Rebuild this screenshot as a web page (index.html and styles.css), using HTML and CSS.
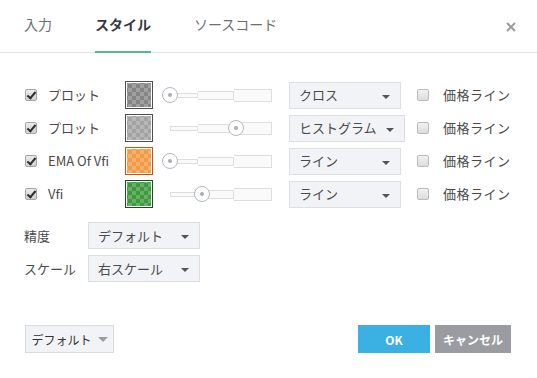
FILE: index.html
```html
<!DOCTYPE html>
<html lang="ja">
<head>
    <meta charset="UTF-8">
    <meta name="viewport" content="width=device-width, initial-scale=1.0">
    <title>スタイル</title>
    <link rel="stylesheet" href="styles.css">
</head>
<body>
    <div class="dialog">
        <header class="tabs">
            <span class="tab">入力</span>
            <span class="tab active">スタイル</span>
            <span class="tab">ソースコード</span>
            <span class="close">
                <svg width="10" height="10" viewBox="0 0 10 10"><path d="M1 1 L9 9 M9 1 L1 9" stroke="#9a9da3" stroke-width="2"/></svg>
            </span>
        </header>

        <div class="content">
            <div class="plot-row">
                <span class="check checked"></span>
                <span class="label">プロット</span>
                <span class="swatch swatch-dark"></span>
                <div class="slider">
                    <div class="track"><i class="seg s1"></i><i class="seg s2"></i><i class="seg s3"></i></div>
                    <span class="handle" style="left: 0px"></span>
                </div>
                <div class="select">クロス</div>
                <span class="check"></span>
                <span class="price">価格ライン</span>
            </div>
            <div class="plot-row">
                <span class="check checked"></span>
                <span class="label">プロット</span>
                <span class="swatch swatch-gray"></span>
                <div class="slider">
                    <div class="track"><i class="seg s1"></i><i class="seg s2"></i><i class="seg s3"></i></div>
                    <span class="handle" style="left: 66px"></span>
                </div>
                <div class="select wide">ヒストグラム</div>
                <span class="check"></span>
                <span class="price">価格ライン</span>
            </div>
            <div class="plot-row">
                <span class="check checked"></span>
                <span class="label">EMA Of Vfi</span>
                <span class="swatch swatch-orange"></span>
                <div class="slider">
                    <div class="track"><i class="seg s1"></i><i class="seg s2"></i><i class="seg s3"></i></div>
                    <span class="handle" style="left: 0px"></span>
                </div>
                <div class="select">ライン</div>
                <span class="check"></span>
                <span class="price">価格ライン</span>
            </div>
            <div class="plot-row">
                <span class="check checked"></span>
                <span class="label">Vfi</span>
                <span class="swatch swatch-green"></span>
                <div class="slider">
                    <div class="track"><i class="seg s1"></i><i class="seg s2"></i><i class="seg s3"></i></div>
                    <span class="handle" style="left: 32px"></span>
                </div>
                <div class="select">ライン</div>
                <span class="check"></span>
                <span class="price">価格ライン</span>
            </div>

            <div class="options">
                <div class="option-row">
                    <span class="opt-label">精度</span>
                    <div class="select">デフォルト</div>
                </div>
                <div class="option-row">
                    <span class="opt-label">スケール</span>
                    <div class="select">右スケール</div>
                </div>
            </div>
        </div>

        <footer class="footer">
            <button class="btn-default">デフォルト<span class="caret"></span></button>
            <div class="actions">
                <button class="btn-ok">OK</button>
                <button class="btn-cancel">キャンセル</button>
            </div>
        </footer>
    </div>
</body>
</html>
```

FILE: styles.css
```css
* {
    margin: 0;
    padding: 0;
    box-sizing: border-box;
    font-family: "Noto Sans CJK JP", "Noto Sans", sans-serif;
}

body {
    background: #ffffff;
    color: #4a4a4a;
    font-size: 13px;
}

.dialog {
    width: 537px;
    height: 378px;
    display: flex;
    flex-direction: column;
}

/* tabs */
.tabs {
    height: 53px;
    display: flex;
    align-items: stretch;
    padding-left: 24px;
    border-bottom: 1px solid #e0e2e5;
    position: relative;
}

.tab {
    font-size: 14px;
    color: #6b6e75;
    margin-right: 43px;
    display: flex;
    align-items: center;
    padding-bottom: 4px;
    border-bottom: 2px solid transparent;
    margin-bottom: -1px;
}

.tab.active {
    color: #363a42;
    font-weight: bold;
    border-bottom-color: #53b987;
}

.close {
    position: absolute;
    right: 21px;
    top: 17px;
}

/* plot rows */
.content {
    padding: 28px 0 0 25px;
}

.plot-row {
    display: flex;
    align-items: center;
    height: 28px;
    margin-bottom: 5px;
}

.check {
    width: 12px;
    height: 12px;
    border: 1px solid #b9bbbf;
    border-radius: 2px;
    background: linear-gradient(#f2f2f2, #dcdcdc);
    margin-right: 14px;
    position: relative;
    flex-shrink: 0;
}

.check.checked {
    margin-right: 11px;
    border-color: #a3a5a9;
    background: linear-gradient(#ececec, #cfd0d2);
}

.check.checked::after {
    content: "";
    position: absolute;
    left: 3px;
    top: 0px;
    width: 3px;
    height: 7px;
    border: solid #2e2e2e;
    border-width: 0 2px 2px 0;
    transform: rotate(40deg);
}

.label {
    width: 77px;
    white-space: nowrap;
    color: #4a4a4a;
    padding-bottom: 1px;
}

.swatch {
    width: 28px;
    height: 28px;
    border: 1px solid #555;
    padding: 1px;
    margin-right: 9px;
    flex-shrink: 0;
    background-clip: content-box;
    background-color: #fff;
    background-image:
        linear-gradient(45deg, rgba(255,255,255,0.22) 25%, transparent 25%, transparent 75%, rgba(255,255,255,0.22) 75%),
        linear-gradient(45deg, rgba(255,255,255,0.22) 25%, transparent 25%, transparent 75%, rgba(255,255,255,0.22) 75%);
    background-size: 8px 8px;
    background-position: 1px 1px, 5px 5px;
    background-origin: content-box;
}

.swatch-dark {
    border-color: #4d4d4d;
    background-color: #858585;
}

.swatch-gray {
    border-color: #4d4d4d;
    background-color: #a3a3a3;
}

.swatch-orange {
    border-color: #c9540f;
    background-color: #f39a45;
}

.swatch-green {
    border-color: #1c4d1c;
    background-color: #3e9a3e;
}

/* opacity slider */
.slider {
    width: 110px;
    height: 18px;
    margin-right: 17px;
    position: relative;
    flex-shrink: 0;
}

.track {
    position: absolute;
    left: 8px;
    right: 0;
    top: 0;
    bottom: 0;
    display: flex;
    align-items: center;
}

.seg {
    display: block;
    border: 1px solid #dcdee2;
    background: #fafafa;
}

.seg + .seg {
    border-left: none;
}

.s1 {
    width: 28px;
    height: 5px;
}

.s2 {
    width: 36px;
    height: 9px;
}

.s3 {
    width: 38px;
    height: 13px;
}

.handle {
    position: absolute;
    top: 1px;
    width: 16px;
    height: 16px;
    border: 1px solid #b4b8c0;
    border-radius: 50%;
    background: #fff;
}

.handle::after {
    content: "";
    position: absolute;
    left: 5px;
    top: 5px;
    width: 4px;
    height: 4px;
    border-radius: 50%;
    background: #a8adb6;
}

/* selects */
.select {
    width: 112px;
    height: 27px;
    background: #f1f3f6;
    border: 1px solid #dcdfe4;
    padding-left: 9px;
    padding-bottom: 1px;
    display: flex;
    align-items: center;
    color: #4a4a4a;
    margin-right: 16px;
    position: relative;
    flex-shrink: 0;
    white-space: nowrap;
}

.select::after {
    content: "";
    position: absolute;
    right: 10px;
    top: 12px;
    border-left: 4px solid transparent;
    border-right: 4px solid transparent;
    border-top: 4px solid #555;
}

.select.wide {
    width: 116px;
    margin-right: 12px;
}

.price {
    white-space: nowrap;
    letter-spacing: 0.5px;
    padding-bottom: 1px;
}

/* options */
.options {
    margin-top: 14px;
}

.option-row {
    display: flex;
    align-items: center;
    height: 27px;
    margin-bottom: 6px;
}

.opt-label {
    width: 64px;
    margin-left: -1px;
    padding-bottom: 1px;
}

/* footer */
.footer {
    margin-top: auto;
    margin-bottom: 25px;
    padding: 0 26px 0 25px;
    display: flex;
    justify-content: space-between;
    align-items: center;
}

button {
    height: 28px;
    border: none;
    font-size: 12px;
    cursor: pointer;
}

.btn-default {
    width: 89px;
    background: #f1f3f6;
    border: 1px solid #d8dbe0;
    color: #333;
    display: flex;
    align-items: center;
    justify-content: center;
}

.caret {
    margin-left: 6px;
    border-left: 5px solid transparent;
    border-right: 5px solid transparent;
    border-top: 5px solid #9a9da3;
}

.actions {
    display: flex;
    gap: 5px;
}

.btn-ok {
    width: 72px;
    background: #3bb1e3;
    color: #fff;
    font-weight: bold;
}

.btn-cancel {
    width: 76px;
    background: #9a9ca2;
    color: #fff;
    font-weight: bold;
}
```
